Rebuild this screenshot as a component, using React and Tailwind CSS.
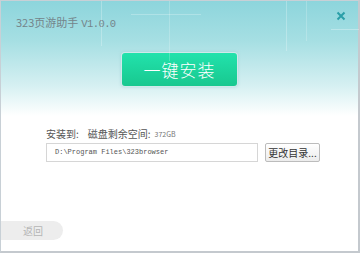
export default function App() {
  const cjk = { fontFamily: '"Noto Sans CJK SC", "Liberation Sans", sans-serif' };
  return (
    <div className="w-[360px] h-[253px] bg-white overflow-hidden">
      <div
        className="relative w-[360px] h-[253px] border-l border-t border-[#c8d0d6] border-r-2 border-b-2 border-r-[#c4c9ce] border-b-[#c4c9ce] bg-[linear-gradient(to_bottom,#8dd5dc_0px,#a6dfe3_40px,#d6f0f2_85px,#ffffff_115px,#ffffff_100%)] flex flex-col"
        style={cjk}
      >
        <div className="absolute left-[100px] top-[0px] w-[1px] h-[45px] bg-white/25" />
        <div className="absolute left-[168px] top-[0px] w-[1px] h-[60px] bg-white/20" />
        <div className="absolute left-[285px] top-[0px] w-[1px] h-[50px] bg-white/25" />
        <div className="absolute left-[305px] top-[0px] w-[1px] h-[40px] bg-white/20" />
        <div className="absolute left-[130px] top-[13px] w-[70px] h-[1px] bg-white/25" />
        <div className="absolute left-[330px] top-[28px] w-[28px] h-[1px] bg-white/30" />
        <div className="flex items-center justify-between pl-[15px] pr-[12px] pt-[14px] h-[30px]">
          <span className="text-[11px] leading-none text-[#74848a]">
            <span>323页游助手</span>
            <span className="ml-[3px] text-[10.5px] tracking-[-0.6px]" style={{ fontFamily: '"Liberation Mono", monospace' }}>V1.0.0</span>
          </span>
          <svg width="10" height="10" viewBox="0 0 10 10" className="mt-[-14px]">
            <path d="M1.5 1.5 L8.5 8.5 M8.5 1.5 L1.5 8.5" stroke="#2a9fa8" strokeWidth="2" />
          </svg>
        </div>
        <div className="flex justify-center pt-[21px] pl-[0px]">
          <div className="rounded-[4px] p-[1px] bg-[#cfe9ea] shadow-[0_0_3px_rgba(150,200,205,0.6)]">
            <div className="w-[115px] h-[33px] rounded-[3px] bg-[linear-gradient(to_bottom,#22e2ac,#18c88f)] flex items-center justify-center text-white text-[17px] font-light tracking-[1px]">
              一键安装
            </div>
          </div>
        </div>
        <div className="pl-[45px] pt-[42px] flex items-center text-[10px] text-[#555] leading-none">
          <span>安装到:</span>
          <span className="ml-[9px]">磁盘剩余空间:</span>
          <span className="ml-[4px] text-[7px] text-[#777]">372GB</span>
        </div>
        <div className="pl-[45px] pt-[4px] flex items-center">
          <div className="w-[212px] h-[19px] border border-[#d6d6d6] bg-white flex items-center pl-[8px] text-[7px] text-[#555]" style={{ fontFamily: '"Liberation Mono", monospace' }}>
            D:\Program Files\323browser
          </div>
          <div className="ml-[7px] w-[55px] h-[19px] border border-[#bcbcbc] rounded-[2px] bg-[linear-gradient(to_bottom,#ffffff,#ececec)] flex items-center justify-center text-[10px] text-[#333]">
            更改目录...
          </div>
        </div>
        <div className="flex-1" />
        <div className="mb-[11px] w-[62px] h-[19px] rounded-r-full bg-[#ededed] flex items-center justify-center text-[10px] text-[#b5b5b5] pl-[2px]">
          返回
        </div>
      </div>
    </div>
  );
}
